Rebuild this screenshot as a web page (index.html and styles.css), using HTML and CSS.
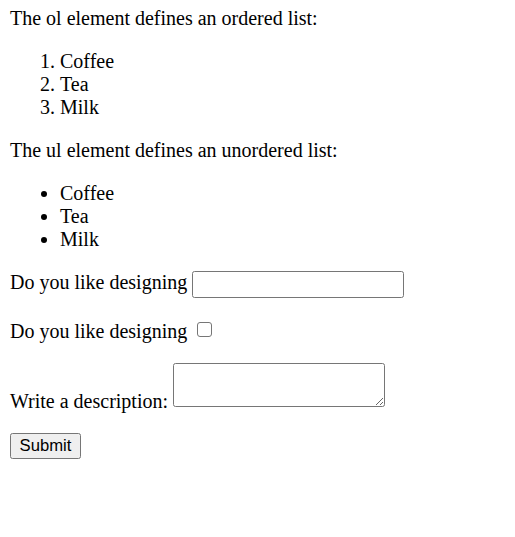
FILE: index.html
```html
<!DOCTYPE html>
<html>
<head>
<meta charset="utf-8">
<link rel="stylesheet" href="styles.css">
</head>
<body>
<p class="text">The ol element defines an ordered list:</p>
<ol class="list">
  <li>Coffee</li>
  <li>Tea</li>
  <li>Milk</li>
</ol>
<p class="text">The ul element defines an unordered list:</p>
<ul class="list bullets">
  <li>Coffee</li>
  <li>Tea</li>
  <li>Milk</li>
</ul>
<form class="form">
  <div class="row row-input">
    <span class="label">Do you like designing</span>
    <input class="field" type="text">
  </div>
  <div class="row row-check">
    <span class="label">Do you like designing</span>
    <input class="check" type="checkbox">
  </div>
  <div class="row row-area">
    <span class="label">Write a description:</span>
    <textarea class="area"></textarea>
  </div>
  <div class="row row-btn">
    <button class="btn" type="button">Submit</button>
  </div>
</form>
</body>
</html>
```
FILE: styles.css
```css
html, body {
  background: #ffffff;
}
body {
  margin: 0;
  padding: 7px 10px 0;
  font-family: "Liberation Serif", "Times New Roman", serif;
  font-size: 20px;
  line-height: 23px;
  color: #000000;
}
.text {
  margin: 0;
}
.list {
  margin: 20px 0;
  padding-left: 50px;
}
.list li {
  line-height: 23px;
}
.bullets {
  list-style: disc;
}
.form {
  display: flex;
  flex-direction: column;
}
.row {
  display: flex;
}
.label {
  line-height: 23px;
  white-space: nowrap;
}
.row-input {
  align-items: flex-start;
}
.field {
  box-sizing: border-box;
  width: 212px;
  height: 27px;
  margin: 0 0 0 5px;
  border: 1px solid #767676;
  border-radius: 2.5px;
  padding: 1px 2px;
  background: #fff;
}
.row-check {
  margin-top: 22px;
  align-items: flex-start;
}
.check {
  -webkit-appearance: none;
  appearance: none;
  box-sizing: border-box;
  width: 15px;
  height: 15px;
  margin: 2px 0 0 10px;
  border: 1px solid #767676;
  border-radius: 3px;
  background: #fff;
}
.row-area {
  margin-top: 20px;
  align-items: flex-end;
}
.area {
  box-sizing: border-box;
  width: 212px;
  height: 44px;
  margin: 0 0 6px 5px;
  border: 1px solid #767676;
  border-radius: 2.5px;
  padding: 2px;
  background: #fff;
}
.row-btn {
  margin-top: 20px;
}
.btn {
  box-sizing: border-box;
  width: 71px;
  height: 26px;
  margin: 0;
  padding: 0;
  border: 1px solid #767676;
  border-radius: 2.5px;
  background: #efefef;
  font-family: "Liberation Sans", Arial, sans-serif;
  font-size: 16.67px;
  color: #000;
}
```
